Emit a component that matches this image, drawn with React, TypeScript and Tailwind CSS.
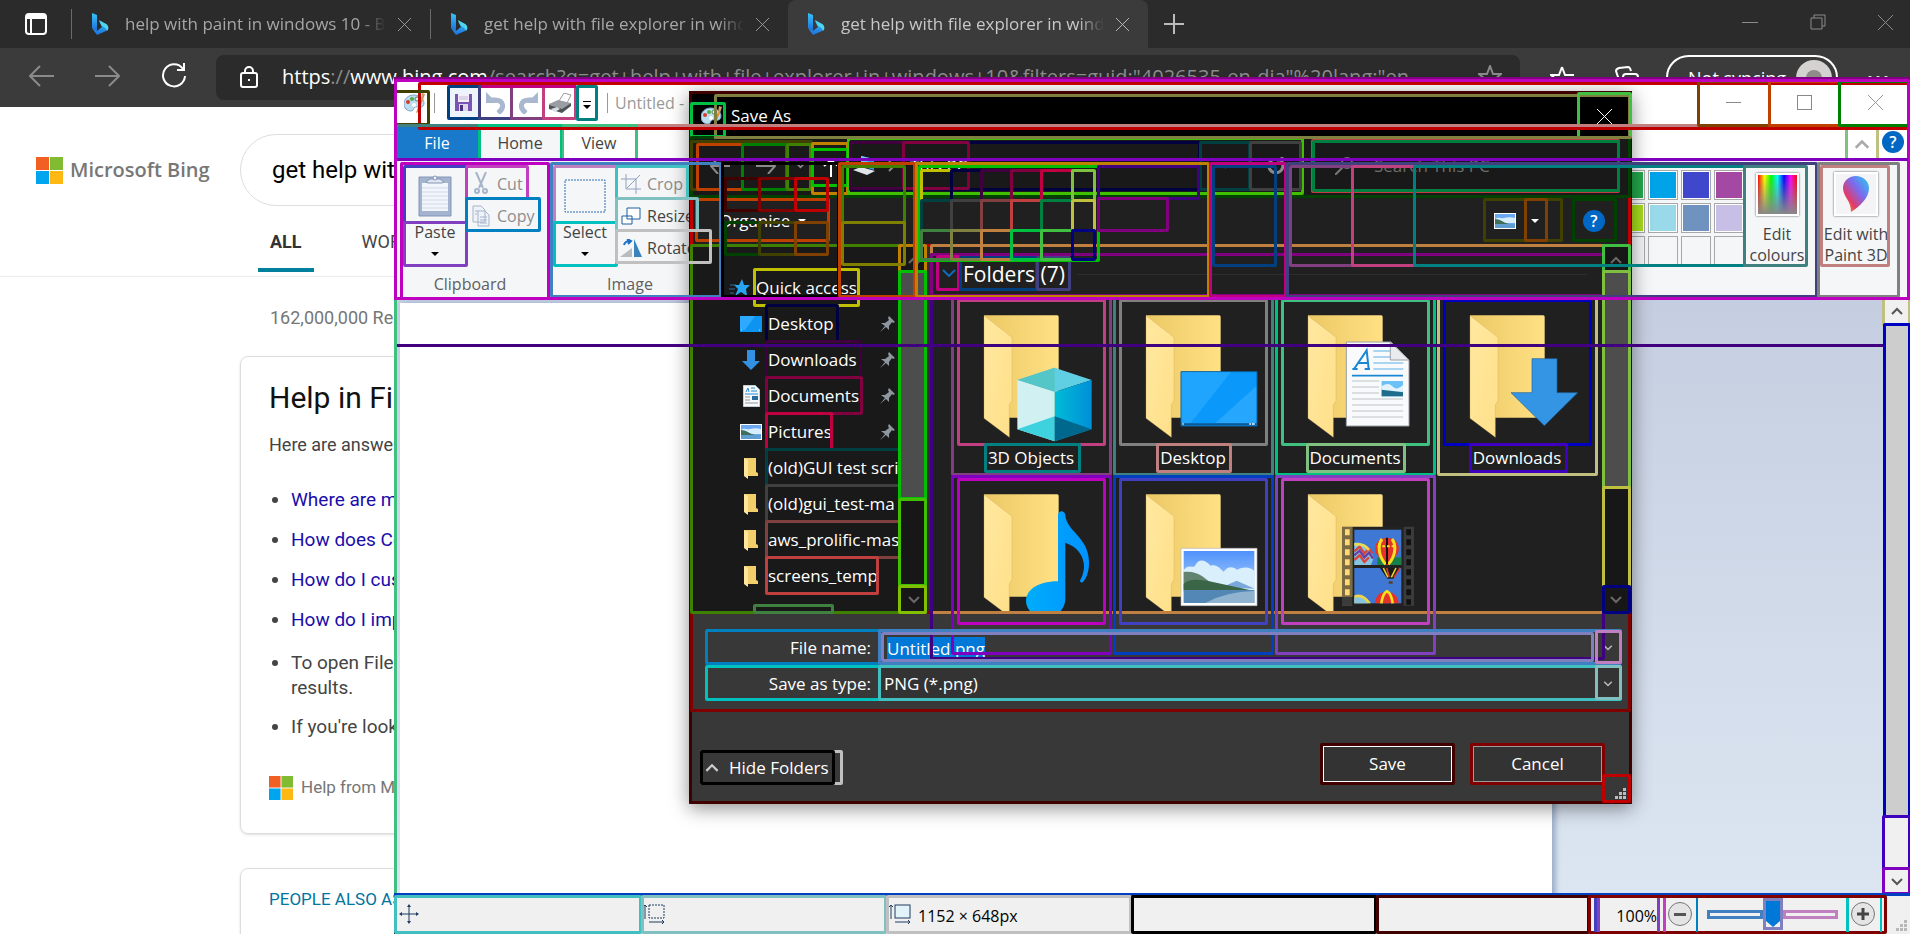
import { useEffect, useRef, type ReactNode } from "react";

const UI = "font-['Open_Sans','Noto_Sans',sans-serif]";

/* ---------- element outlines ---------- */

type Outline = [color: string, x1: number, y1: number, x2: number, y2: number];

const dialogOutlines: Outline[] = [
  ["#400000", 689, 91, 1632, 804],
  ["#800000", 690, 611, 1631, 712],
  ["#808040", 714, 94, 1631, 139],
  ["#00c040", 690, 102, 726, 138],
  ["#40c040", 1577, 92, 1632, 139],
  ["#c00000", 690, 195, 1631, 247],
  ["#004000", 690, 136, 1631, 198],
  ["#404000", 690, 140, 813, 191],
  ["#c04000", 696, 143, 744, 191],
  ["#008000", 741, 143, 788, 191],
  ["#408000", 786, 143, 812, 191],
  ["#c08000", 811, 142, 849, 195],
  ["#00c000", 811, 148, 849, 187],
  ["#40c000", 847, 137, 1304, 195],
  ["#808040", 714, 136, 1631, 139],
  ["#000040", 849, 141, 1201, 191],
  ["#400040", 849, 141, 904, 190],
  ["#800040", 902, 141, 970, 190],
  ["#004040", 1199, 141, 1251, 191],
  ["#404040", 1249, 141, 1302, 191],
  ["#c04040", 1311, 139, 1620, 193],
  ["#008040", 1312, 140, 1620, 192],
  ["#c04000", 695, 198, 830, 242],
  ["#404000", 1483, 198, 1563, 242],
  ["#804000", 1524, 198, 1548, 242],
  ["#004000", 1572, 198, 1617, 242],
  ["#408000", 690, 244, 927, 614],
  ["#c0c000", 753, 268, 860, 307],
  ["#000040", 765, 304, 839, 343],
  ["#400040", 765, 340, 862, 379],
  ["#800040", 765, 376, 863, 415],
  ["#c00040", 765, 412, 833, 451],
  ["#004040", 765, 448, 901, 487],
  ["#404040", 765, 484, 901, 523],
  ["#804040", 765, 520, 901, 559],
  ["#c04040", 765, 556, 879, 595],
  ["#408040", 753, 604, 834, 614],
  ["#c08000", 898, 244, 927, 273],
  ["#00c000", 898, 270, 927, 500],
  ["#40c000", 898, 498, 927, 587],
  ["#80c000", 898, 585, 927, 614],
  ["#c08040", 930, 244, 1605, 614],
  ["#400080", 930, 253, 1605, 660],
  ["#800080", 930, 253, 1605, 297],
  ["#c00080", 936, 255, 960, 291],
  ["#004080", 959, 256, 1038, 291],
  ["#404080", 1036, 256, 1071, 291],
  ["#804080", 951, 297, 1112, 476],
  ["#c04080", 957, 299, 1106, 446],
  ["#008080", 984, 443, 1081, 473],
  ["#408080", 1113, 297, 1274, 476],
  ["#808080", 1119, 299, 1268, 446],
  ["#c08080", 1156, 443, 1232, 473],
  ["#00c080", 1275, 297, 1436, 476],
  ["#40c080", 1281, 299, 1430, 446],
  ["#80c080", 1306, 443, 1406, 473],
  ["#c0c080", 1437, 297, 1598, 476],
  ["#0000c0", 1443, 299, 1592, 446],
  ["#4000c0", 1469, 443, 1568, 473],
  ["#8000c0", 951, 475, 1112, 655],
  ["#c000c0", 957, 478, 1106, 625],
  ["#0040c0", 1113, 475, 1274, 655],
  ["#4040c0", 1119, 478, 1268, 625],
  ["#8040c0", 1275, 475, 1436, 655],
  ["#c040c0", 1281, 478, 1430, 625],
  ["#40c040", 1602, 244, 1631, 273],
  ["#80c040", 1602, 270, 1631, 489],
  ["#c0c040", 1602, 486, 1631, 588],
  ["#000080", 1602, 585, 1631, 614],
  ["#0080c0", 705, 629, 881, 665],
  ["#4080c0", 878, 629, 1622, 665],
  ["#8080c0", 881, 632, 1594, 662],
  ["#c080c0", 1595, 630, 1622, 664],
  ["#00c0c0", 705, 665, 881, 701],
  ["#40c0c0", 878, 665, 1622, 701],
  ["#80c0c0", 1595, 665, 1622, 700],
  ["#c0c0c0", 700, 750, 843, 785],
  ["#000000", 700, 750, 835, 785],
  ["#400000", 1320, 743, 1455, 785],
  ["#800000", 1470, 743, 1605, 785],
  ["#c00000", 1602, 774, 1631, 803],
];

const shapeColors = [
  ["#c0c000", "#000040", "#400040", "#800040", "#c00040", "#80c040"],
  ["#004040", "#404040", "#804040", "#c04040", "#008040", "#c0c040"],
  ["#408040", "#808040", "#c08040", "#00c040", "#40c040", "#000080"],
];
const shapeX = [920, 950, 980, 1010, 1040, 1071, 1093];
const shapeY = [169, 199, 229, 258];
const shapeOutlines: Outline[] = shapeColors.flatMap((row, r) =>
  row.map((c, i): Outline => [c, shapeX[i], shapeY[r], shapeX[i + 1] + 3, shapeY[r + 1] + 3]),
);

const paintOutlines: Outline[] = [
  ["#800080", 394, 77, 1912, 80],
  ["#40c080", 394, 300, 397, 893],
  ["#c08080", 637, 124, 1699, 127],
  ["#c00000", 418, 82, 1910, 130],
  ["#404000", 394, 90, 430, 126],
  ["#004080", 447, 85, 481, 120],
  ["#404080", 478, 85, 513, 120],
  ["#804080", 510, 85, 545, 120],
  ["#c04080", 542, 85, 577, 120],
  ["#c00080", 481, 85, 576, 88],
  ["#008080", 576, 85, 598, 121],
  ["#804000", 1697, 80, 1771, 127],
  ["#c04000", 1768, 80, 1841, 127],
  ["#008000", 1838, 80, 1911, 127],
  ["#408080", 397, 124, 479, 127],
  ["#00c080", 478, 124, 563, 127],
  ["#40c080", 562, 124, 638, 127],
  ["#00c080", 478, 130, 481, 160],
  ["#00c080", 560, 130, 563, 160],
  ["#40c080", 562, 130, 564, 160],
  ["#40c080", 635, 130, 638, 160],
  ["#80c080", 1845, 130, 1848, 160],
  ["#c0c080", 1876, 130, 1879, 160],
  ["#c000c0", 394, 79, 1910, 300],
  ["#8000c0", 397, 158, 1908, 161],
  ["#c000c0", 400, 162, 550, 300],
  ["#4040c0", 403, 165, 468, 224],
  ["#8040c0", 403, 221, 468, 267],
  ["#c040c0", 465, 165, 529, 200],
  ["#0080c0", 465, 197, 541, 232],
  ["#4080c0", 550, 162, 722, 298],
  ["#c080c0", 553, 165, 618, 224],
  ["#00c0c0", 553, 221, 618, 267],
  ["#40c0c0", 615, 165, 689, 200],
  ["#80c0c0", 615, 197, 699, 232],
  ["#c0c0c0", 615, 229, 712, 264],
  ["#000000", 721, 162, 840, 298],
  ["#400000", 724, 177, 761, 212],
  ["#800000", 758, 177, 797, 212],
  ["#c00000", 794, 177, 829, 212],
  ["#004000", 724, 221, 761, 256],
  ["#404000", 758, 221, 797, 256],
  ["#804000", 794, 221, 829, 256],
  ["#c04000", 838, 162, 916, 298],
  ["#408000", 841, 165, 906, 224],
  ["#808000", 841, 221, 906, 266],
  ["#c08000", 915, 162, 1210, 298],
  ["#00c000", 918, 165, 1100, 262],
  ...shapeOutlines,
  ["#400080", 1097, 165, 1200, 200],
  ["#800080", 1097, 197, 1169, 232],
  ["#c00080", 1209, 162, 1287, 298],
  ["#004080", 1212, 165, 1277, 267],
  ["#404080", 1286, 162, 1818, 298],
  ["#804080", 1289, 165, 1354, 267],
  ["#c04080", 1351, 165, 1416, 267],
  ["#008080", 1413, 165, 1746, 267],
  ["#408080", 1743, 165, 1808, 267],
  ["#808080", 1817, 162, 1900, 298],
  ["#c08080", 1820, 165, 1890, 267],
  ["#c000c0", 394, 297, 1910, 300],
  ["#c0c080", 1882, 300, 1885, 326],
  ["#c0c080", 1908, 300, 1911, 326],
  ["#400080", 397, 344, 1883, 347],
  ["#0000c0", 1883, 323, 1911, 818],
  ["#4000c0", 1882, 815, 1911, 870],
  ["#8000c0", 1882, 867, 1911, 895],
  ["#0040c0", 394, 893, 1911, 896],
  ["#40c0c0", 394, 895, 642, 934],
  ["#80c0c0", 641, 895, 887, 934],
  ["#c0c0c0", 886, 895, 1132, 934],
  ["#000000", 1131, 895, 1377, 934],
  ["#400000", 1376, 895, 1590, 934],
  ["#800000", 1588, 895, 1887, 934],
  ["#4040c0", 1594, 898, 1597, 932],
  ["#8040c0", 1597, 898, 1600, 932],
  ["#8040c0", 1657, 898, 1660, 932],
  ["#c040c0", 1663, 898, 1666, 932],
  ["#0080c0", 1696, 898, 1698, 932],
  ["#00c0c0", 1846, 898, 1849, 932],
  ["#00c0c0", 1880, 898, 1882, 932],
];

function Outlines({ items }: { items: Outline[] }) {
  return (
    <div aria-hidden="true" className="pointer-events-none absolute inset-0">
      {items.map(([color, x1, y1, x2, y2], i) => {
        const line = x2 - x1 <= 3 || y2 - y1 <= 3;
        return (
          <div
            key={i}
            className={line ? "absolute" : "absolute rounded-[2px] border-[3px]"}
            style={{
              left: x1,
              top: y1,
              width: x2 - x1,
              height: y2 - y1,
              ...(line ? { backgroundColor: color } : { borderColor: color }),
            }}
          />
        );
      })}
    </div>
  );
}

/* ---------- icons ---------- */

function Palette({ className = "size-[22px]" }: { className?: string }) {
  return (
    <svg viewBox="0 0 22 22" className={className}>
      <path d="M10 3C4 3 0 7 0 12c0 4 3 7 7 7 3 0 2-3 4-4s5 2 8-1c3-4-1-11-9-11z" fill="#bcdcf0" stroke="#7ba7c4" />
      <circle cx="4" cy="10" r="2" fill="#d93a2b" />
      <circle cx="8" cy="7" r="2" fill="#4fae4a" />
      <circle cx="13" cy="7" r="2" fill="#e3f0f8" stroke="#4c8a5a" />
      <circle cx="10" cy="13" r="2" fill="#fff" />
      <path d="M17 7l2 1-5 12-2 1 1-3z" fill="#e48a2a" />
      <path d="M17 7l1-6 3 1-2 6z" fill="#c99c6b" />
    </svg>
  );
}

function BingB() {
  return (
    <svg viewBox="0 0 18 24" className="h-6 w-[18px] shrink-0">
      <defs>
        <linearGradient id="bing" x1="0" y1="0" x2="0" y2="1">
          <stop offset="0" stopColor="#39c2f5" />
          <stop offset="1" stopColor="#1b6fe0" />
        </linearGradient>
      </defs>
      <path d="M1 1l5 2v16l-5-3z" fill="url(#bing)" />
      <path d="M1 16l5 3 5-4-3-6 7 3c2 1 3 5 0 7l-9 4z" fill="url(#bing)" />
      <path d="M8 8l7 4c3 2 3 5 1 7-1-3-3-4-5-5z" fill="#4fd5f0" />
    </svg>
  );
}

function Cross({ className = "size-[15px]" }: { className?: string }) {
  return (
    <svg viewBox="0 0 15 15" className={className} fill="none" stroke="currentColor">
      <path d="M0 0l15 15M15 0L0 15" />
    </svg>
  );
}

function Chevron({ up = false, className = "h-2 w-3" }: { up?: boolean; className?: string }) {
  return (
    <svg viewBox="0 0 12 8" className={className} fill="none" stroke="currentColor" strokeWidth="2">
      <path d={up ? "M1 7l5-5 5 5" : "M1 1l5 5 5-5"} />
    </svg>
  );
}

function Down({ className = "h-1 w-2" }: { className?: string }) {
  return (
    <svg viewBox="0 0 8 4" className={className}>
      <path d="M0 0h8L4 4z" fill="currentColor" />
    </svg>
  );
}

function HelpDot() {
  return (
    <span className="flex size-[22px] items-center justify-center rounded-full bg-[#0067c5] text-base font-semibold text-white">
      ?
    </span>
  );
}

function MsLogo({ className }: { className: string }) {
  return (
    <svg viewBox="0 0 27 27" className={className}>
      <path d="M0 0h13v13H0z" fill="#f25f22" />
      <path d="M14 0h13v13H14z" fill="#80bb31" />
      <path d="M0 14h13v13H0z" fill="#00a5ef" />
      <path d="M14 14h13v13H14z" fill="#feb813" />
    </svg>
  );
}

function Landscape({ className }: { className: string }) {
  return (
    <svg viewBox="0 0 22 16" className={className}>
      <path d="M0 0h22v16H0z" fill="#fff" />
      <path d="M1 1h20v14H1z" fill="#6ca8f0" />
      <path d="M1 6c4-3 5 0 9-1s7-1 11 0v5H1z" fill="#d9eefb" />
      <path d="M1 6c5 0 7 3 14 5H1z" fill="#3f6f5a" />
      <path d="M1 11h20v4H1z" fill="#5f9cd0" />
    </svg>
  );
}

function Pin() {
  return (
    <svg viewBox="0 0 16 16" className="size-4 text-[#8e979f]">
      <path d="M10 0l6 6-2 1-1-1-3 4v4l-3-3-6 5 5-6-4-3h4l4-3-1-2z" fill="currentColor" />
    </svg>
  );
}

function MiniFolder() {
  return (
    <svg viewBox="0 0 14 22" className="h-[22px] w-[14px]">
      <path d="M0 1h12v14l2 1v3H4z" fill="#f3cf6b" />
      <path d="M0 1l4 2v19l-4-3z" fill="#ffe69c" />
    </svg>
  );
}

const place: Record<string, ReactNode> = {
  star: (
    <svg viewBox="0 0 22 18" className="h-[18px] w-[22px]">
      <path d="M13 0l2 6h6l-4 4 1 7-6-4-6 4 3-7-4-4h5z" fill="#27a5f2" />
      <path d="M1 6h6M0 10h6M1 14h4" stroke="#2e6f9d" />
    </svg>
  ),
  desktop: (
    <svg viewBox="0 0 22 16" className="h-4 w-[22px]">
      <path d="M0 0h22v16H0z" fill="#0d93f0" />
      <path d="M0 0h15L5 14H0z" fill="#2daaff" />
      <path d="M1 14h20" stroke="#bfe4ff" strokeDasharray="1 17 1" />
    </svg>
  ),
  downloads: (
    <svg viewBox="0 0 18 20" className="h-5 w-[18px]">
      <path d="M5 0h8v11h5l-9 9-9-9h5z" fill="#3391e4" />
    </svg>
  ),
  documents: (
    <svg viewBox="0 0 17 22" className="h-[22px] w-[17px]">
      <path d="M0 0h12l5 5v17H0z" fill="#f7f9fa" stroke="#9aa4ab" />
      <path d="M3 7l2-4 1 4M8 3h4M8 6h6M2 9h13" stroke="#1f8ad6" fill="none" />
      <path d="M2 12h5M2 15h5M2 18h13" stroke="#8e979d" />
      <path d="M9 11h6v4H9z" fill="#2b6a9c" />
    </svg>
  ),
  pictures: <Landscape className="h-4 w-[22px]" />,
  folder: <MiniFolder />,
};

function Balloon({ x, y }: { x: number; y: number }) {
  return (
    <g transform={`translate(${x} ${y})`}>
      <path d="M0 -38c-30 0-42 26-32 48L-5 44H5L32 10C42-12 30-38 0-38z" fill="#e5322b" />
      <path d="M-15-34c-16 22-8 54 11 76M15-34c16 22 8 54-11 76" stroke="#f7e21f" strokeWidth="9" fill="none" />
      <path d="M0-38v80" stroke="#111" strokeWidth="6" />
      <path d="M-28-12h56" stroke="#f7e21f" strokeWidth="6" strokeDasharray="8 6" />
    </g>
  );
}

const overlay: Record<string, ReactNode> = {
  "3D Objects": (
    <>
      <path d="M404 384l111 37-111 36-112-36z" fill="#60cfe4" />
      <path d="M404 384v73l-112-36z" fill="#54c6c8" />
      <path d="M292 421l112 36v148l-112-36z" fill="#d0f0f2" />
      <path d="M404 457l111-36v148l-111 36z" fill="url(#cubeRight)" />
      <path d="M292 569l112-39v75z" fill="#3dd2de" />
      <path d="M404 530l111 39-111 36z" fill="#00688c" />
    </>
  ),
  Desktop: (
    <>
      <path d="M297 396h228v163H297z" fill="#0a99fb" stroke="#0a5f9c" strokeWidth="3" />
      <path d="M299 398h147L326 550h-27z" fill="#20a5ff" />
      <path d="M523 440v110H400z" fill="#39b0ff" opacity="0.6" />
      <path d="M298 554h226" stroke="#0d5b94" strokeWidth="6" />
      <path d="M301 553h4M502 553h5M510 553h8" stroke="#fff" strokeWidth="4" />
    </>
  ),
  Documents: (
    <>
      <path d="M307 307h134l54 54v198H307z" fill="#f8fafb" stroke="#9aa0a6" strokeWidth="3" />
      <path d="M439 307l56 54h-56z" fill="#e9ebed" stroke="#9aa0a6" strokeWidth="3" />
      <path d="M330 388l38-56 6 56M340 370h30M325 388h16M362 388h16" stroke="#1b87d2" strokeWidth="6" fill="none" />
      <path d="M388 334h50M388 352h50M388 370h90M388 388h90" stroke="#5ab0e6" strokeWidth="3" />
      <path d="M324 408h153" stroke="#1b87d2" strokeWidth="5" />
      <path d="M324 424h81M324 442h81M324 460h81M324 478h153M324 496h153M324 514h153M324 532h153" stroke="#c0c4c8" strokeWidth="3" />
      <path d="M413 424h64v46h-64z" fill="#6bc0f5" />
      <path d="M413 440q20-14 32 0t32-4v20h-64z" fill="#e3f3fc" />
      <path d="M413 450l64 8v12h-64z" fill="#1f6d8c" />
    </>
  ),
  Downloads: <path d="M378 357h75v102h62L415 558 315 459h63z" fill="#3595e5" stroke="#1d639d" strokeWidth="2" />,
  Music: (
    <path
      d="M414 488V290c0-16 21-16 22 0 4 50 72 66 71 142 0 28-8 46-18 58-4 4-12 0-8-6 26-48 4-96-45-112v168c-2 50-50 62-84 50-54-18-50-102 62-102z"
      fill="url(#note)"
    />
  ),
  Pictures: (
    <>
      <path d="M297 389h228v172H297z" fill="#fff" stroke="#b5b5b5" strokeWidth="2" />
      <path d="M305 397h212v156H305z" fill="url(#sky)" />
      <path d="M305 455c14-22 26-4 34-14 16-30 40-8 46 0 20-6 30 10 40 18 14-20 30-14 40-6 20-10 42-8 52 4v60H305z" fill="#d9effc" />
      <path d="M420 506l44-20 54 24z" fill="#7aa7dc" />
      <path d="M305 460c40-6 64 18 90 40l40 12H305z" fill="#61836f" />
      <path d="M305 495c24-20 60-8 84-6l128 28H305z" fill="#3a6547" />
      <path d="M305 514h212v39H305z" fill="#5387b5" />
      <path d="M370 553q60-34 147-36v36z" fill="#90b4d0" />
    </>
  ),
  Videos: (
    <>
      <path d="M294 324h31v237h-31z" fill="#7b6b42" />
      <path d="M294 535h31v26h-31zM478 324h32v237h-32z" fill="#3b3b3b" />
      <path d="M325 324h153v237H325z" fill="#222" />
      <path d="M310 332v202" stroke="#ffda76" strokeWidth="14" strokeDasharray="18 12" />
      <path d="M494 332v226" stroke="#111" strokeWidth="14" strokeDasharray="18 12" />
      <path d="M331 333h141v106H331zM331 448h141v106H331z" fill="#3f78d4" />
      <path d="M400 416h72v23h-72z" fill="#178048" />
      <path d="M331 372q40-4 58 46l-8 21h-50z" fill="#86c4e0" />
      <path d="M331 398l16-14 14 20 14-14 10 14M331 424l16-14 14 20 14-14" stroke="#d8443c" strokeWidth="7" fill="none" />
      <path d="M331 410l16-14 14 20 14-14 12 18" stroke="#6a3fa0" strokeWidth="7" fill="none" />
      <path d="M331 378q28-6 44 16" stroke="#f1d94a" strokeWidth="8" fill="none" />
      <Balloon x={429} y={395} />
      <path d="M408 448h60l-20 32h-18z" fill="#191919" />
      <path d="M418 448l14 28M456 448l-14 28" stroke="#e5d22b" strokeWidth="5" />
      <path d="M428 448l8 28M468 448l-18 28" stroke="#d83a2b" strokeWidth="5" />
      <path d="M434 488h12v7h-12z" fill="#5b3b20" />
      <path d="M331 530q28-10 50 24h-50z" fill="#efd34a" />
      <path d="M331 538q24-8 40 16h-40z" fill="#86c4e0" />
      <path d="M394 554c-2-46 68-46 70 0z" fill="#e5322b" />
      <path d="M412 554q4-30 17-36 13 6 17 36" stroke="#f7e21f" strokeWidth="8" fill="none" />
    </>
  ),
};

function BigFolder({ name }: { name: string }) {
  return (
    <svg viewBox="111 178 447 441" className="h-[147px] w-[149px]">
      <defs>
        <linearGradient id="back" x1="0" y1="0" x2="1" y2="0">
          <stop offset="0" stopColor="#ecc864" />
          <stop offset="1" stopColor="#ffe184" />
        </linearGradient>
        <linearGradient id="flap" x1="0" y1="0" x2="1" y2="1">
          <stop offset="0" stopColor="#ffe89f" />
          <stop offset="1" stopColor="#ffe08a" />
        </linearGradient>
        <linearGradient id="cubeRight" x1="0" y1="0" x2="1" y2="0">
          <stop offset="0" stopColor="#00bcd6" />
          <stop offset="1" stopColor="#008fd8" />
        </linearGradient>
        <linearGradient id="note" x1="0" y1="0" x2="1" y2="0">
          <stop offset="0" stopColor="#00adfa" />
          <stop offset="1" stopColor="#0092ff" />
        </linearGradient>
        <linearGradient id="sky" x1="0" y1="0" x2="0" y2="1">
          <stop offset="0" stopColor="#4f92fb" />
          <stop offset="1" stopColor="#cfe6fb" />
        </linearGradient>
      </defs>
      <path d="M192 227h220q4 0 4 5v302H192z" fill="url(#back)" />
      <path d="M192 228l84 65v190l-8 12v98l-76-57z" fill="url(#flap)" stroke="#c9a85a" strokeWidth="1" />
      {overlay[name]}
    </svg>
  );
}

/* ---------- browser ---------- */

const tabs = [
  { title: "help with paint in windows 10 - B", active: false, width: "w-[359px]" },
  { title: "get help with file explorer in wind", active: false, width: "w-[358px]" },
  { title: "get help with file explorer in wind", active: true, width: "w-[360px]" },
];

function Browser() {
  const fade = "min-w-0 flex-1 overflow-hidden whitespace-nowrap mask-r-from-90%";
  return (
    <div className="flex h-full flex-col">
      <div className="flex h-12 shrink-0 items-center bg-[#2b2b2b] text-[#a6a6a6]">
        <button aria-label="Tab actions" className="flex w-[71px] shrink-0 justify-center">
          <svg viewBox="0 0 22 22" className="size-[22px]" fill="none" stroke="#fff" strokeWidth="2">
            <rect x="1" y="1" width="20" height="20" rx="3" />
            <path d="M1 4h20" strokeWidth="4" />
            <path d="M6 5v16" />
          </svg>
        </button>
        {tabs.map((t, i) => (
          <div
            key={i}
            className={`flex shrink-0 items-center pl-[19px] pr-[19px] ${t.width} ${
              t.active ? "h-12 rounded-t-lg bg-[#3b3b3b] text-[#c8c8c8]" : "h-[30px] border-l border-[#6a6a6a]"
            }`}
          >
            <BingB />
            <span className={`ml-4 text-[17px] ${fade}`}>{t.title}</span>
            <button aria-label="Close tab" className="ml-3">
              <Cross className="size-[13px]" />
            </button>
          </div>
        ))}
        <button aria-label="New tab" className="ml-4">
          <svg viewBox="0 0 20 20" className="size-5" stroke="#bbb" strokeWidth="2">
            <path d="M10 0v20M0 10h20" />
          </svg>
        </button>
        <div className="ml-auto flex items-center gap-[52px] pb-1 pr-[17px] text-[#8b8b8b]">
          <span className="h-px w-4 bg-[#8b8b8b]" />
          <svg viewBox="0 0 16 16" className="size-4" fill="none" stroke="currentColor">
            <path d="M1 4h11v11H1zM4 4V1h11v11h-3" />
          </svg>
          <Cross />
        </div>
      </div>
      <div className="flex h-[59px] shrink-0 items-center bg-[#3b3b3b] text-white">
        <div className="flex w-[216px] shrink-0 items-center gap-[41px] pb-1 pl-[29px]">
          <svg viewBox="0 0 25 22" className="h-[22px] w-[25px]" fill="none" stroke="#8a8a8a" strokeWidth="2">
            <path d="M11 1L1 11l10 10M1 11h24" />
          </svg>
          <svg viewBox="0 0 25 22" className="h-[22px] w-[25px]" fill="none" stroke="#8a8a8a" strokeWidth="2">
            <path d="M14 1l10 10-10 10M24 11H0" />
          </svg>
          <svg viewBox="0 0 25 25" className="size-[25px]" fill="none" stroke="#fff" strokeWidth="2">
            <path d="M22 6a11 11 0 1 0 2 7M23 0v7h-7" />
          </svg>
        </div>
        <div className="flex h-[45px] min-w-0 flex-1 items-center rounded-lg bg-[#2b2b2b] pb-[2px] pl-6 pr-[18px]">
          <svg viewBox="0 0 18 22" className="h-[22px] w-[18px] shrink-0" fill="none" stroke="#fff" strokeWidth="2">
            <rect x="1" y="7" width="16" height="14" rx="2" />
            <path d="M5 7V5a4 4 0 0 1 8 0v2M9 13v2" />
          </svg>
          <span className="ml-6 whitespace-nowrap text-[20px] text-[#8c8c8c]">
            <span className="text-white">https</span>://<span className="text-white">www.bing.com</span>
            /search?q=get+help+with+file+explorer+in+windows+10&amp;filters=guid:"4026535-en-dia"%20lang:"en
          </span>
          <svg viewBox="0 0 24 24" className="ml-auto size-6 shrink-0" fill="none" stroke="#8a8a8a" strokeWidth="2">
            <path d="M12 1l3 8h8l-6 5 2 8-7-5-7 5 2-8-6-5h8z" />
          </svg>
        </div>
        <svg viewBox="0 0 24 24" className="ml-[30px] size-6 shrink-0" fill="none" stroke="#fff" strokeWidth="2">
          <path d="M12 1l3 8h9M12 1L9 9H1l6 5-2 8M17 14h7M17 19h7" />
        </svg>
        <svg viewBox="0 0 24 24" className="ml-[41px] size-6 shrink-0" fill="none" stroke="#fff" strokeWidth="2">
          <rect x="8" y="8" width="15" height="15" rx="3" />
          <path d="M5 17L1 5q0-2 3-3l9-1q2 0 3 4M15 12v7" />
        </svg>
        <button className="ml-[27px] flex h-[45px] w-[172px] shrink-0 items-center justify-between rounded-full border-2 border-white pl-5 pr-1 text-lg">
          Not syncing
          <span className="flex size-9 items-center justify-center rounded-full bg-[#d4d2d0]">
            <span className="size-4 rounded-full bg-[#8f8b88]" />
          </span>
        </button>
        <span className="ml-[30px] mr-[22px] flex shrink-0 gap-1">
          <i className="size-1 rounded-full bg-white" />
          <i className="size-1 rounded-full bg-white" />
          <i className="size-1 rounded-full bg-white" />
        </span>
      </div>
      <BingPage />
    </div>
  );
}

const questions = ["Where are my files?", "How does Cortana help?", "How do I customise it?", "How do I import files?"];

function BingPage() {
  return (
    <div className="flex-1 overflow-hidden bg-white font-[Roboto,sans-serif] text-[#444]">
      <div className="flex items-center pl-9 pt-[27px]">
        <div className={`flex w-[204px] items-center gap-[7px] ${UI}`}>
          <MsLogo className="size-[27px]" />
          <span className="text-[20px] font-semibold text-[#777]">Microsoft Bing</span>
        </div>
        <div className="flex h-[72px] w-[800px] items-center rounded-full border border-[#ddd] pl-[31px] text-2xl text-black">
          get help with file explorer
        </div>
      </div>
      <nav className="flex h-[71px] items-end gap-12 border-b border-[#ececec] pl-[258px] text-lg">
        <a href="#all" className="mb-1 border-b-4 border-[#00809d] px-3 pb-[14px] font-bold leading-6 text-[#333]">ALL</a>
        <a href="#work" className="pb-[22px] leading-6">WORK</a>
      </nav>
      <p className="pl-[270px] pt-[29px] text-lg leading-6 text-[#767676]">162,000,000 Results</p>
      <section className="ml-[240px] mt-[26px] h-[478px] w-[800px] rounded-lg border border-[#ddd] px-7 pt-[23px] shadow">
        <h2 className="text-[30px] leading-9 text-[#111]">Help in File Explorer</h2>
        <p className="mt-[15px] text-lg leading-7">Here are answers to common questions</p>
        <ul className="mt-[21px] list-disc pl-[22px] text-[19px]">
          {questions.map((q) => (
            <li key={q} className="h-10 leading-10">
              <a href="#q" className="text-[#1a0dab]">{q}</a>
            </li>
          ))}
          <li className="pt-[10px] leading-[25px]">
            To open File Explorer
            <br />
            results.
          </li>
          <li className="mt-[14px] leading-[25px]">If you're looking for</li>
        </ul>
        <p className="mt-9 flex items-center gap-2 text-[17px] text-[#767676]">
          <MsLogo className="size-6" />
          Help from Microsoft
        </p>
      </section>
      <section className="ml-[240px] mt-[34px] h-40 w-[800px] rounded-lg border border-[#ddd] px-7 pt-[18px] text-[17px] text-[#00749e] shadow">
        PEOPLE ALSO ASK
      </section>
    </div>
  );
}

/* ---------- paint ---------- */

const palette = [
  ["bg-black", "bg-[#7f7f7f]", "bg-[#880015]", "bg-[#ed1c24]", "bg-[#ff7f27]", "bg-[#fff200]", "bg-[#22a94c]", "bg-[#00a2e8]", "bg-[#3f48cc]", "bg-[#a349a4]"],
  ["bg-white", "bg-[#c3c3c3]", "bg-[#b97a57]", "bg-[#ffaec9]", "bg-[#ffc90e]", "bg-[#efe4b0]", "bg-[#a8dd1d]", "bg-[#99d9ea]", "bg-[#7092be]", "bg-[#c8bfe7]"],
  ["", "", "", "", "", "", "", "", "", ""],
];

function Group({ label, width, children }: { label?: string; width: string; children: ReactNode }) {
  return (
    <div className={`flex shrink-0 flex-col ${width}`}>
      <div className="flex h-[106px] items-start pl-1 pt-1">{children}</div>
      {label && <p className="pr-[10px] text-center leading-7 text-[#5f5f5f]">{label}</p>}
    </div>
  );
}

function Small({ icon, children, dim = false }: { icon: ReactNode; children: ReactNode; dim?: boolean }) {
  return (
    <button className={`flex h-8 items-center gap-[5px] pl-1 ${dim ? "text-[#8d8d8d]" : "text-[#444]"}`}>
      <span className="flex w-[22px] justify-center">{icon}</span>
      {children}
    </button>
  );
}

function Paint() {
  return (
    <div className={`absolute bottom-0 left-[394px] right-0 top-[78px] flex flex-col border-l border-black bg-white text-base ${UI}`}>
      <div className="flex h-[49px] shrink-0 items-center text-[#999]">
        <span className="ml-[9px] flex w-[22px]"><Palette /></span>
        <span className="ml-2 h-5 w-px bg-[#999]" />
        <span className="ml-3 flex h-[29px] w-8 items-center justify-center bg-[#eef4fc]">
          <svg viewBox="0 0 17 17" className="size-[17px]">
            <path d="M0 0h17v17H0z" fill="#7a54b4" />
            <path d="M3 0h11v8H3z" fill="#f3effa" />
            <path d="M4 10h9v7H4z" fill="#ddd6ea" />
            <path d="M5 11h3v6H5z" fill="#4a3378" />
            <path d="M4 3h9M4 5h9" stroke="#c7bddb" />
          </svg>
        </span>
        <svg viewBox="0 0 20 22" className="ml-[7px] h-[22px] w-5" fill="none" stroke="#a9b7cf" strokeWidth="5">
          <path d="M4 8h5c9 0 10 8 3 13" />
          <path d="M0 0v11h11z" fill="#a9b7cf" stroke="none" />
        </svg>
        <svg viewBox="0 0 20 22" className="ml-3 h-[22px] w-5" fill="none" stroke="#a9b7cf" strokeWidth="5">
          <path d="M16 8h-5C2 8 1 16 8 21" />
          <path d="M20 0v11H9z" fill="#a9b7cf" stroke="none" />
        </svg>
        <svg viewBox="0 0 24 20" className="ml-[10px] h-5 w-6">
          <path d="M11 8l5-8 7 2-4 8z" fill="#fff" stroke="#999" />
          <path d="M1 11l9-4 13 3-9 7-13-3z" fill="#9a9ea2" />
          <path d="M1 12v4l13 4 9-7v-3l-9 6z" fill="#4f5358" />
          <path d="M3 16l6-2 3 2-5 3z" fill="#d9dde0" />
        </svg>
        <svg viewBox="0 0 8 8" className="ml-[11px] mt-1 size-2 text-black">
          <path d="M0 0h8v1H0zM0 4h8L4 8z" fill="currentColor" />
        </svg>
        <span className="ml-4 h-5 w-px bg-[#999]" />
        <span className="ml-[7px]">Untitled -</span>
        <div className="ml-auto flex items-center gap-14 pr-[27px]">
          <span className="h-px w-[15px] bg-[#888]" />
          <span className="size-[15px] border border-[#888]" />
          <Cross />
        </div>
      </div>
      <div className="flex h-[33px] shrink-0 items-center text-[#444]">
        <button className="h-full w-[84px] bg-[#1979ca] pb-[2px] text-white">File</button>
        <button className="h-full w-[82px] bg-[#f5f6f7] pb-[2px]">Home</button>
        <button className="h-full w-[76px] pb-[2px]">View</button>
        <span className="ml-auto flex w-8 justify-center text-[#aaa]">
          <Chevron up className="h-[10px] w-4" />
        </span>
        <span className="flex w-8 justify-center pb-1 pr-[2px]"><HelpDot /></span>
      </div>
      <div className="flex h-[138px] shrink-0 bg-[#f5f6f8] pl-[5px] pr-[10px] pt-1">
        <Group label="Clipboard" width="w-[150px]">
          <button className="flex w-[62px] flex-col items-center text-[#444]">
            <svg viewBox="0 0 34 42" className="mt-[7px] h-[42px] w-[34px]">
              <path d="M1 2h32v39H1z" fill="#a4b4cf" stroke="#8496b6" />
              <path d="M4 8h26v28H4z" fill="#f2f6fc" />
              <path d="M4 13h26M4 17h26M4 21h26M4 25h26M4 29h26M4 33h26" stroke="#cfd9e8" />
              <path d="M8 7l4-3h10l4 3-2 1H10z" fill="#dfe6f0" stroke="#8496b6" />
              <circle cx="17" cy="3" r="2" fill="#f2f6fc" stroke="#8496b6" />
            </svg>
            <span className="mt-[3px] leading-6">Paste</span>
            <Down className="mt-2 h-1 w-2 text-black" />
          </button>
          <div>
            <Small
              dim
              icon={
                <svg viewBox="0 0 14 24" className="h-6 w-[14px]" fill="none" stroke="#a6b3c8" strokeWidth="2">
                  <path d="M2 0l7 16M12 0L5 16" />
                  <circle cx="3" cy="19" r="2" />
                  <circle cx="11" cy="19" r="2" />
                </svg>
              }
            >
              Cut
            </Small>
            <Small
              dim
              icon={
                <svg viewBox="0 0 18 22" className="h-[22px] w-[18px]" fill="#eef3fa" stroke="#a6b3c8">
                  <path d="M1 1h8l4 4v12H1zM6 6h7l4 4v11H6z" />
                  <path d="M8 12h7M8 15h7M8 18h7M3 6h3M3 9h2" />
                </svg>
              }
            >
              Copy
            </Small>
          </div>
        </Group>
        <Group label="Image" width="w-[170px]">
          <button className="flex w-[62px] flex-col items-center text-[#444]">
            <svg viewBox="0 0 42 34" className="mt-[11px] h-[34px] w-[42px]" fill="none" stroke="#2b6cb0">
              <rect x="1" y="1" width="40" height="32" strokeDasharray="2 1" />
            </svg>
            <span className="mt-[7px] leading-6">Select</span>
            <Down className="mt-2 h-1 w-2 text-black" />
          </button>
          <div>
            <Small
              dim
              icon={
                <svg viewBox="0 0 20 20" className="size-5" fill="none" stroke="#8fa2c0">
                  <path d="M5 0v15h15M0 5h15v15M19 1L6 14" />
                </svg>
              }
            >
              Crop
            </Small>
            <Small
              icon={
                <svg viewBox="0 0 20 18" className="h-[18px] w-5" fill="#fff" stroke="#1f5f9f">
                  <path d="M1 9h10v8H1zM6 1h13v11H6z" />
                </svg>
              }
            >
              Resize
            </Small>
            <Small
              icon={
                <svg viewBox="0 0 22 18" className="h-[18px] w-[22px]">
                  <path d="M0 18h12V9z" fill="#b9bcbf" />
                  <path d="M14 0v18h8z" fill="#3a84bd" />
                  <path d="M4 6q1-4 6-4M7 0l4 2-3 3" stroke="#1b6fc4" fill="none" strokeWidth="2" />
                </svg>
              }
            >
              Rotate
            </Small>
          </div>
        </Group>
        <div className="ml-auto flex">
          <div className="mr-[2px] grid auto-rows-[30px] grid-cols-10 content-start gap-[3px] pt-[6px]">
            {palette.flat().map((c, i) => (
              <span key={i} className={`size-[30px] border border-[#a8a8a8] p-[1px] ${c ? "bg-white" : ""}`}>
                <span className={`block size-full ${c}`} />
              </span>
            ))}
          </div>
          <button className="flex w-[62px] flex-col items-center text-[#444]">
            <span className="mt-[9px] size-[43px] border-2 border-white bg-[linear-gradient(to_top,#888,transparent),linear-gradient(to_right,#f00,#ff0,#0f0,#0ff,#00f,#f0f,#f00)] shadow-[0_0_2px_#555]" />
            <span className="mt-2 leading-[21px]">
              Edit
              <br />
              colours
            </span>
          </button>
          <button className="ml-3 flex w-[72px] flex-col items-center text-[#444]">
            <span className="mt-2 flex size-11 items-center justify-center border-2 border-white bg-[#f4f4f6] shadow-[0_0_2px_#555]">
              <svg viewBox="0 0 26 36" className="h-9 w-[26px]">
                <defs>
                  <linearGradient id="p3d" x1="1" y1="0" x2="0" y2="1">
                    <stop offset="0" stopColor="#22d3ee" />
                    <stop offset="0.4" stopColor="#7a6bf0" />
                    <stop offset="0.7" stopColor="#e23a6b" />
                    <stop offset="1" stopColor="#f7b500" />
                  </linearGradient>
                </defs>
                <path d="M13 0C5 0 0 6 0 12c0 9 8 12 8 24C17 30 26 22 26 12 26 5 20 0 13 0z" fill="url(#p3d)" />
              </svg>
            </span>
            <span className="mt-2 whitespace-nowrap leading-[21px]">
              Edit with
              <br />
              Paint 3D
            </span>
          </button>
          <span className="w-2" />
        </div>
      </div>
      <div className="flex min-h-0 flex-1">
        <div className="min-w-0 flex-1 overflow-hidden bg-gradient-to-b from-[#c5cee0] to-[#dce6f2] pl-[5px] pt-[5px]">
          <div className="h-[648px] w-[1152px] bg-white shadow-[4px_0_5px_#9fb0c9]" />
        </div>
        <div className="flex w-[26px] shrink-0 flex-col items-center justify-between bg-[#f0f0f0] text-[#555]">
          <span className="flex h-[26px] items-center"><Chevron up /></span>
          <span className="w-full flex-1 bg-[#cdcdcd]" />
          <span className="flex h-[78px] items-end pb-2"><Chevron /></span>
        </div>
      </div>
      <div className="flex h-10 shrink-0 items-center bg-[#f0f0f0] text-black">
        <div className="w-[246px] pl-1">
          <svg viewBox="0 0 20 20" className="size-5" stroke="#1f3a63" fill="#1f3a63">
            <path d="M10 2v16M2 10h16" />
            <path d="M10 0l2 3H8zM10 20l2-3H8zM0 10l3-2v4zM20 10l-3-2v4z" stroke="none" />
          </svg>
        </div>
        <div className="w-[246px] pl-[2px]">
          <svg viewBox="0 0 22 20" className="h-5 w-[22px]" stroke="#1f3a63" fill="none">
            <path d="M2 1v14M0 3l2-2 2 2M6 18h15M19 16l2 2-2 2" />
            <rect x="6" y="1" width="15" height="13" strokeDasharray="2 1" />
          </svg>
        </div>
        <div className="flex flex-1 items-center gap-[7px] pl-[2px]">
          <svg viewBox="0 0 22 20" className="h-5 w-[22px]" stroke="#1f3a63" fill="none">
            <path d="M2 1v14M0 3l2-2 2 2M6 18h15M19 16l2 2-2 2" />
            <rect x="6" y="1" width="15" height="13" fill="#e3f3fa" />
          </svg>
          <span className="pt-1">1152 × 648px</span>
        </div>
        <span className="mr-[11px] pt-1">100%</span>
        <button aria-label="Zoom out" className="flex size-6 items-center justify-center rounded-full border border-[#777] bg-[#e4e4e4]">
          <span className="h-[3px] w-3 bg-[#555]" />
        </button>
        <div className="ml-[15px] mr-[13px] flex items-center">
          <span className="h-[9px] w-14 border-[3px] border-[#4080c0]" />
          <span className="flex h-8 w-5 justify-center border-[3px] border-[#8080c0] bg-[#f0f0f0]">
            <svg viewBox="0 0 14 26" className="h-[26px] w-[14px]">
              <path d="M0 0h14v20l-7 6-7-6z" fill="#0078d7" />
            </svg>
          </span>
          <span className="h-[9px] w-[55px] border-[3px] border-[#c080c0]" />
        </div>
        <button aria-label="Zoom in" className="mr-[21px] flex size-6 items-center justify-center rounded-full border border-[#777] bg-[#e4e4e4]">
          <svg viewBox="0 0 12 12" className="size-3" stroke="#444" strokeWidth="3">
            <path d="M6 0v12M0 6h12" />
          </svg>
        </button>
        <Grip className="mr-[3px] mt-[22px] size-[11px] text-[#b8b8b8]" />
      </div>
    </div>
  );
}

function Grip({ className }: { className: string }) {
  return (
    <svg viewBox="0 0 11 11" className={className} fill="currentColor">
      <path d="M8 0h3v3H8zM4 4h3v3H4zM8 4h3v3H8zM0 8h3v3H0zM4 8h3v3H4zM8 8h3v3H8z" />
    </svg>
  );
}

/* ---------- save dialog ---------- */

const tree = [
  { name: "Desktop", icon: "desktop", pinned: true },
  { name: "Downloads", icon: "downloads", pinned: true },
  { name: "Documents", icon: "documents", pinned: true },
  { name: "Pictures", icon: "pictures", pinned: true },
  { name: "(old)GUI test scri", icon: "folder", pinned: false },
  { name: "(old)gui_test-ma", icon: "folder", pinned: false },
  { name: "aws_prolific-mas", icon: "folder", pinned: false },
  { name: "screens_temp", icon: "folder", pinned: false },
];

const folders = ["3D Objects", "Desktop", "Documents", "Downloads", "Music", "Pictures", "Videos"];

function ScrollBar({ thumb }: { thumb: string }) {
  return (
    <div className="flex w-[26px] shrink-0 flex-col items-center bg-[#171717] text-[#686868]">
      <span className="flex h-[27px] shrink-0 items-center pt-1"><Chevron up /></span>
      <span className={`w-full bg-[#4d4d4d] ${thumb}`} />
      <span className="mt-auto flex h-[27px] shrink-0 items-center"><Chevron /></span>
    </div>
  );
}

function SaveDialog() {
  const nameRef = useRef<HTMLInputElement>(null);
  useEffect(() => {
    nameRef.current?.focus();
    nameRef.current?.select();
  }, []);
  return (
    <div
      role="dialog"
      aria-label="Save As"
      className={`absolute left-[689px] top-[91px] flex w-[943px] flex-col bg-[#383838] text-[17px] text-white shadow-[0_4px_18px_rgba(0,0,0,0.45)] ${UI}`}
    >
      <div className="flex h-12 items-center bg-black pl-3 pt-[2px]">
        <Palette />
        <span className="ml-2">Save As</span>
        <button aria-label="Close" className="ml-auto mr-5"><Cross /></button>
      </div>
      <div className="flex h-[59px] items-center bg-[#191919] pb-[6px] text-[#8a8a8a]">
        <svg viewBox="0 0 20 16" className="ml-[21px] h-4 w-5" fill="none" stroke="currentColor" strokeWidth="2">
          <path d="M8 0L1 8l7 8M1 8h19" />
        </svg>
        <svg viewBox="0 0 20 16" className="ml-[26px] h-4 w-5" fill="none" stroke="currentColor" strokeWidth="2">
          <path d="M12 0l7 8-7 8M19 8H0" />
        </svg>
        <Chevron className="ml-[19px] h-[7px] w-[11px]" />
        <svg viewBox="0 0 16 18" className="ml-[17px] mt-1 h-[18px] w-4" fill="none" stroke="#fff" strokeWidth="2">
          <path d="M1 7l7-6 7 6M8 1v17" />
        </svg>
        <svg viewBox="0 0 24 22" className="ml-[14px] h-[22px] w-6">
          <path d="M8 1l13 3v11L8 11z" fill="#2e9be8" />
          <path d="M8 1l13 3-13 5z" fill="#7cc7f5" />
          <path d="M0 15l8-3 14 4-8 4z" fill="#dfe5ea" />
        </svg>
        <svg viewBox="0 0 8 12" className="ml-[11px] h-3 w-2" fill="none" stroke="currentColor" strokeWidth="2">
          <path d="M1 1l5 5-5 5" />
        </svg>
        <span className="ml-[14px] text-white">This PC</span>
        <Chevron className="ml-auto h-[7px] w-[11px]" />
        <svg viewBox="0 0 18 18" className="ml-9 h-[18px] w-[18px]" fill="none" stroke="currentColor" strokeWidth="3">
          <path d="M14 4a7 7 0 1 1-9-1M15 0v6h-5" />
        </svg>
        <label className="ml-[50px] flex w-[297px] items-center">
          <svg viewBox="0 0 18 18" className="size-[18px]" fill="none" stroke="#777" strokeWidth="2">
            <circle cx="12" cy="6" r="5" />
            <path d="M8 10l-8 8" />
          </svg>
          <input
            aria-label="Search This PC"
            placeholder="Search This PC"
            className="ml-[21px] w-[180px] bg-transparent placeholder:text-[#6d6d6d] focus:outline-none"
          />
        </label>
      </div>
      <div className="flex h-[46px] items-center bg-[#202020] pl-[30px] pr-[27px]">
        <button className="flex items-center gap-2">
          Organise <Down />
        </button>
        <Landscape className="ml-auto h-4 w-[22px]" />
        <Down className="ml-[15px] h-1 w-2" />
        <span className="ml-[44px]"><HelpDot /></span>
      </div>
      <div className="flex h-[369px]">
        <div className="flex w-[238px] shrink-0 bg-[#191919]">
          <div className="flex-1 overflow-hidden pl-[40px] pt-[26px]">
            <div className="flex h-9 items-center whitespace-nowrap">
              <span className="mr-[5px]">{place.star}</span>Quick access
            </div>
            {tree.map((t) => (
              <div key={t.name} className="flex h-9 items-center whitespace-nowrap pl-[11px] pr-[6px]">
                <span className="flex w-[22px] shrink-0 justify-center">{place[t.icon]}</span>
                <span className="ml-[6px] min-w-0 flex-1">{t.name}</span>
                {t.pinned && <Pin />}
              </div>
            ))}
          </div>
          <ScrollBar thumb="h-[227px]" />
        </div>
        <div className="w-[4px] bg-[#2d2d2d]" />
        <div className="min-w-0 flex-1 overflow-hidden bg-[#202020]">
          <div className="flex h-[55px] items-center pl-[11px] pr-4 pt-[6px]">
            <svg viewBox="0 0 14 8" className="mb-1 h-2 w-[14px]" fill="none" stroke="#0f6cbd" strokeWidth="2">
              <path d="M1 1l6 6 6-6" />
            </svg>
            <span className="ml-[7px] text-[21px]">Folders (7)</span>
            <span className="ml-3 h-px flex-1 bg-[#2e2e2e]" />
          </div>
          <div className="grid grid-cols-[repeat(4,162px)] pl-[19px]">
            {folders.map((f) => (
              <figure key={f} className="flex h-[179px] flex-col items-center">
                <BigFolder name={f} />
                <figcaption className="leading-[24px]">{f}</figcaption>
              </figure>
            ))}
          </div>
        </div>
        <ScrollBar thumb="h-[216px]" />
        <div className="w-[3px] bg-[#202020]" />
      </div>
      <div className="flex flex-col pb-[13px] pl-4 pr-[10px] pt-[17px]">
        <div className="flex h-9 items-center">
          <label htmlFor="fname" className="w-[166px] text-right">File name:</label>
          <input
            id="fname"
            ref={nameRef}
            defaultValue="Untitled.png"
            className="ml-[10px] h-[30px] min-w-0 flex-1 bg-[#383838] pl-[6px] selection:bg-[#0078d7] selection:text-white focus:outline-none"
          />
          <span className="flex w-7 justify-center text-[#bbb]"><Chevron className="h-[6px] w-[10px]" /></span>
        </div>
        <div className="flex h-9 items-center">
          <label htmlFor="ftype" className="w-[166px] text-right">Save as type:</label>
          <select
            id="ftype"
            className="ml-[7px] h-[33px] min-w-0 flex-1 appearance-none bg-[#333] pl-[6px] focus:outline-none"
          >
            <option>PNG (*.png)</option>
          </select>
          <span className="flex h-[33px] w-7 items-center justify-center bg-[#333] text-[#bbb]">
            <Chevron className="h-[6px] w-[10px]" />
          </span>
        </div>
      </div>
      <div className="flex h-[89px] items-center gap-[19px] pl-4 pr-[29px] pt-[9px]">
        <button className="mr-auto mt-[7px] flex items-center gap-[10px]">
          <Chevron up className="h-[9px] w-[14px] text-[#ccc]" />
          Hide Folders
        </button>
        <button className="h-[38px] w-[131px] border-2 border-white bg-[#333]">Save</button>
        <button className="h-[38px] w-[131px] border-2 border-[#9b9b9b] bg-[#333]">Cancel</button>
      </div>
      <Grip className="absolute bottom-[5px] right-[6px] size-[11px] text-[#bdbdbd]" />
    </div>
  );
}

export default function App() {
  return (
    <main className={`relative h-screen w-full overflow-hidden ${UI}`}>
      <Browser />
      <Paint />
      <SaveDialog />
      <Outlines items={dialogOutlines} />
      <Outlines items={paintOutlines} />
    </main>
  );
}
